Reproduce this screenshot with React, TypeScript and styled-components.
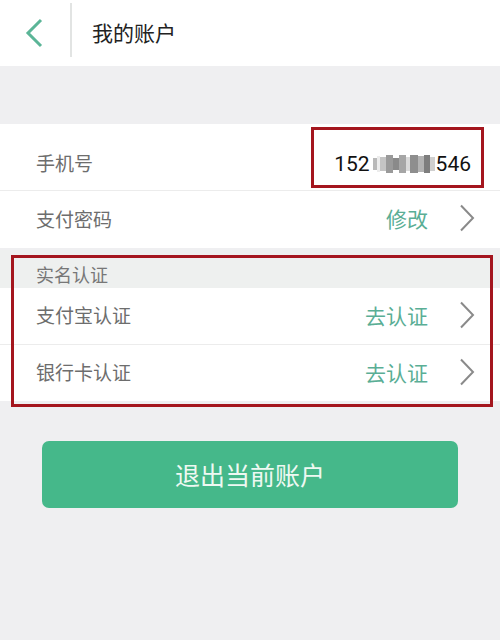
import styled, { createGlobalStyle } from "styled-components";

const GlobalStyle = createGlobalStyle`
  html, body {
    margin: 0;
    padding: 0;
    background: #efeff1;
    font-family: Roboto, "Noto Sans CJK SC", sans-serif;
  }
`;

const Page = styled.div`
  width: 500px;
  height: 640px;
  background: #efeff1;
  overflow: hidden;
`;

const Header = styled.header`
  height: 66px;
  background: #fff;
  display: flex;
  align-items: center;
`;

const BackButton = styled.div`
  width: 70px;
  height: 66px;
  display: flex;
  align-items: center;
  justify-content: center;
  padding-right: 2px;
  box-sizing: border-box;
`;

const HeaderDivider = styled.div`
  width: 2px;
  height: 54px;
  margin-top: -6px;
  background: #e2e4e3;
`;

const Title = styled.h1`
  margin: -3px 0 0 20px;
  font-size: 21px;
  font-weight: 400;
  color: #222;
  font-family: "Noto Sans CJK SC", sans-serif;
`;

const Group = styled.section`
  background: #fff;
`;

const FirstGroup = styled(Group)`
  margin-top: 58px;
`;

const Row = styled.div<{ $h: number; $line?: boolean }>`
  height: ${(p) => p.$h}px;
  display: flex;
  align-items: center;
  padding: 0 0 3px 36px;
  border-bottom: ${(p) => (p.$line ? "1px solid #ececec" : "none")};
  box-sizing: border-box;
`;

const Label = styled.span<{ $drop?: number }>`
  flex: 1;
  padding-top: ${(p) => p.$drop ?? 0}px;
  font-size: 19px;
  color: #6d6d6d;
  font-family: "Noto Sans CJK SC", sans-serif;
`;

const Action = styled.span`
  font-size: 21px;
  color: #5aae95;
  font-family: "Noto Sans CJK SC", sans-serif;
`;

const Chevron = styled.div`
  width: 16px;
  height: 28px;
  margin: 0 25px 0 31px;
  display: flex;
`;

const PhoneBox = styled.div`
  width: 173px;
  height: 61px;
  margin: 3px 16px 0 0;
  border: 3px solid #a4161e;
  box-sizing: border-box;
  display: flex;
  align-items: center;
  justify-content: flex-end;
  padding: 14px 10px 0 0;
  font-size: 21px;
  color: #111;
`;

const Mosaic = styled.span`
  display: inline-flex;
  align-items: center;
  height: 20px;
  margin: 0 1px 0 3px;
  filter: blur(0.7px);
`;

const Tile = styled.span<{ $c: string; $w: number; $h: number }>`
  width: ${(p) => p.$w}px;
  height: ${(p) => p.$h}px;
  background: ${(p) => p.$c};
`;

const AuthWrap = styled.div`
  position: relative;
  margin-top: 2px;
`;

const SectionLabel = styled.div`
  height: 38px;
  display: flex;
  align-items: center;
  padding: 10px 0 0 36px;
  box-sizing: border-box;
  font-size: 18px;
  color: #777;
  background: #eef0ef;
  font-family: "Noto Sans CJK SC", sans-serif;
`;

const Marker = styled.div`
  position: absolute;
  top: 5px;
  bottom: -6px;
  left: 11px;
  right: 7px;
  border: 3px solid #a4161e;
  pointer-events: none;
`;

const LogoutButton = styled.button`
  display: flex;
  align-items: center;
  justify-content: center;
  width: 416px;
  height: 67px;
  margin: 40px 0 0 42px;
  padding: 0 0 2px;
  border: none;
  border-radius: 7px;
  background: #45b88a;
  color: #eef8f2;
  font-size: 25px;
  font-family: "Noto Sans CJK SC", sans-serif;
`;

const tiles = [
  { c: "#b9b9b9", w: 4, h: 12 },
  { c: "#ececec", w: 3, h: 16 },
  { c: "#c4c4c4", w: 6, h: 14 },
  { c: "#9a9a9a", w: 7, h: 18 },
  { c: "#8a8a8a", w: 6, h: 12 },
  { c: "#a6a6a6", w: 7, h: 18 },
  { c: "#dadada", w: 4, h: 14 },
  { c: "#8e8e8e", w: 8, h: 18 },
  { c: "#b3b3b3", w: 6, h: 16 },
  { c: "#7e7e7e", w: 6, h: 18 },
  { c: "#cfcfcf", w: 5, h: 14 },
];

function Arrow() {
  return (
    <Chevron>
      <svg width="16" height="28" viewBox="0 0 16 28">
        <path d="M2 1.5 L14 14 L2 26.5" fill="none" stroke="#8a8a8a" strokeWidth="2" />
      </svg>
    </Chevron>
  );
}

export default function App() {
  return (
    <Page>
      <GlobalStyle />
      <Header>
        <BackButton>
          <svg width="20" height="30" viewBox="0 0 20 30">
            <path d="M17 2 L4 15 L17 28" fill="none" stroke="#5bb597" strokeWidth="3" />
          </svg>
        </BackButton>
        <HeaderDivider />
        <Title>我的账户</Title>
      </Header>

      <FirstGroup>
        <Row $h={67} $line>
          <Label $drop={14}>手机号</Label>
          <PhoneBox>
            152
            <Mosaic>
              {tiles.map((t, i) => (
                <Tile key={i} $c={t.c} $w={t.w} $h={t.h} />
              ))}
            </Mosaic>
            546
          </PhoneBox>
        </Row>
        <Row $h={57}>
          <Label>支付密码</Label>
          <Action>修改</Action>
          <Arrow />
        </Row>
      </FirstGroup>

      <AuthWrap>
        <SectionLabel>实名认证</SectionLabel>
        <Group>
          <Row $h={57} $line>
            <Label>支付宝认证</Label>
            <Action>去认证</Action>
            <Arrow />
          </Row>
          <Row $h={56}>
            <Label>银行卡认证</Label>
            <Action>去认证</Action>
            <Arrow />
          </Row>
        </Group>
        <Marker />
      </AuthWrap>

      <LogoutButton>退出当前账户</LogoutButton>
    </Page>
  );
}
